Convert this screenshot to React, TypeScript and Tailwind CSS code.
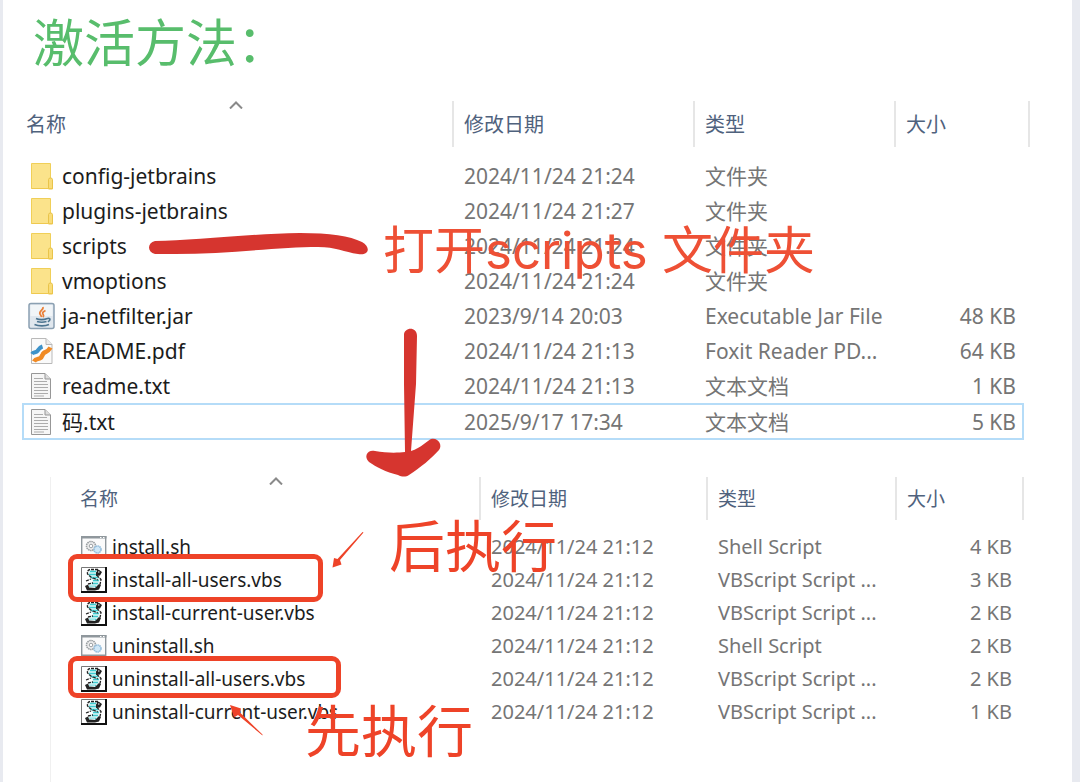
import type { ReactNode } from "react";

type IconKind = "folder" | "jar" | "pdf" | "txt" | "shell" | "vbs";

interface FileEntry {
  name: string;
  icon: IconKind;
  modified: string;
  type: string;
  size?: string;
  selected?: boolean;
}

const PACKAGE_FILES: FileEntry[] = [
  { name: "config-jetbrains", icon: "folder", modified: "2024/11/24 21:24", type: "文件夹" },
  { name: "plugins-jetbrains", icon: "folder", modified: "2024/11/24 21:27", type: "文件夹" },
  { name: "scripts", icon: "folder", modified: "2024/11/24 21:24", type: "文件夹" },
  { name: "vmoptions", icon: "folder", modified: "2024/11/24 21:24", type: "文件夹" },
  { name: "ja-netfilter.jar", icon: "jar", modified: "2023/9/14 20:03", type: "Executable Jar File", size: "48 KB" },
  { name: "README.pdf", icon: "pdf", modified: "2024/11/24 21:13", type: "Foxit Reader PD...", size: "64 KB" },
  { name: "readme.txt", icon: "txt", modified: "2024/11/24 21:13", type: "文本文档", size: "1 KB" },
  { name: "码.txt", icon: "txt", modified: "2025/9/17 17:34", type: "文本文档", size: "5 KB", selected: true },
];

const SCRIPT_FILES: FileEntry[] = [
  { name: "install.sh", icon: "shell", modified: "2024/11/24 21:12", type: "Shell Script", size: "4 KB" },
  { name: "install-all-users.vbs", icon: "vbs", modified: "2024/11/24 21:12", type: "VBScript Script ...", size: "3 KB" },
  { name: "install-current-user.vbs", icon: "vbs", modified: "2024/11/24 21:12", type: "VBScript Script ...", size: "2 KB" },
  { name: "uninstall.sh", icon: "shell", modified: "2024/11/24 21:12", type: "Shell Script", size: "2 KB" },
  { name: "uninstall-all-users.vbs", icon: "vbs", modified: "2024/11/24 21:12", type: "VBScript Script ...", size: "2 KB" },
  { name: "uninstall-current-user.vbs", icon: "vbs", modified: "2024/11/24 21:12", type: "VBScript Script ...", size: "1 KB" },
];

const ICONS: Record<IconKind, ReactNode> = {
  folder: (
    <>
      <path d="M3.500 1.500h19v25h-19z" fill="#fbe38b" stroke="#f0cf58" />
      <path d="M20.500 17.500q0-1.500 2-1.500t2 1.500v9.500h-4z" fill="#f9dc7a" stroke="#e9c44a" />
      <path d="M3.500 26.500h21" stroke="#efc94f" />
    </>
  ),
  jar: (
    <>
      <rect x="1" y="1.500" width="25" height="25" rx="2" fill="#e0e7ee" stroke="#8ba0b2" strokeWidth="1.500" />
      <path d="M2.500 3h22v11h-22z" fill="#f1f5f8" />
      <path d="M15 5c1 3-4.500 4-3 7 .5 1.200 1.600 1.800 1.200 3M17.500 8.500c-3 1.500-3.500 2.500-2.300 4 .7 1 .2 2-.4 2.500" fill="none" stroke="#e9803a" strokeWidth="1.800" />
      <path d="M8 16.500c3 1.300 8 1.300 11.500 0M9 19.500c3 1 6.500 1 9.500 0M6.500 22.500c4 1.800 11 1.800 14.500 0M19.500 16.500c3-.8 3.500 2 .3 3.300" fill="none" stroke="#4c7490" strokeWidth="1.600" />
    </>
  ),
  pdf: (
    <>
      <path d="M3.500 1.500h14.500l6 6v19h-20.500z" fill="#fafafa" stroke="#b9b9b9" />
      <path d="M18 1.500v6h6" fill="#ececec" stroke="#b9b9b9" />
      <path d="M4 17c1.500-2.500 4-1 5.500-3s2-3.500 5-4.500" fill="none" stroke="#3d92c9" strokeWidth="4" />
      <path d="M6 24.500c2-3.500 4.500-2 6.500-3.500s1.500-4 4-5.500c2.500-1.300 4-1.500 6-5" fill="none" stroke="#f08a24" strokeWidth="4.500" />
      <path d="M4 20.500c3-2.500 5-1 7-3s2-4 4.500-5.500 3-1.500 5-4" fill="none" stroke="#fff" />
    </>
  ),
  txt: (
    <>
      <path d="M3.500 1.500h13.500l5.500 5.500v19.500h-19z" fill="#f6f6f6" stroke="#979797" />
      <path d="M17 1.500v5.500h5.500" fill="#dedede" stroke="#979797" />
      <path d="M6 6.500h9M6 9.500h13M6 12.500h14M6 15.500h14M6 18.500h14M6 21.500h14M6 24h10" stroke="#acacac" strokeWidth="1.200" />
    </>
  ),
  shell: (
    <>
      <path d="M1.700 3.700h24v19.500h-24z" fill="#fbfbfb" stroke="#8f979c" strokeWidth="1.400" />
      <path d="M1 3h25.500v2.500H1z" fill="#8f979c" />
      <path d="M20 4.500h1.500M23 4.500h1.500" stroke="#fff" />
      <circle cx="11" cy="13" r="4.500" fill="#f0f0f0" stroke="#9a9fa2" strokeWidth="1.600" strokeDasharray="1.500 .6" />
      <circle cx="11" cy="13" r="1.800" fill="#fff" stroke="#9a9fa2" />
      <circle cx="17.500" cy="16.500" r="3.500" fill="#cfe7f7" stroke="#94bddb" strokeWidth="1.600" strokeDasharray="1.500 .5" />
    </>
  ),
  vbs: (
    <>
      <path d="M1.500 1.500h24v24h-24z" fill="#fff" stroke="#777" />
      <path d="M26 1v25H1" fill="none" stroke="#111" strokeWidth="2" />
      <path d="M9 4h9l-2 4 4 5-2 8-3 2H7l3-5 3-3-5-5z" fill="#dcf6f6" />
      <path d="M10 5.500h6M9 8.500h7M11 11.500h7M13 14.500h6M12 17.500h6M9 20.500h7" stroke="#3ecbd0" strokeWidth="1.700" />
      <path d="M18 3.500h-8Q7 4 7.500 8l5 4.500M17 4.500l3 1.500M17 9.500l4 4-1 5M6 15l5-2M13 12l5 2M8 18l5-1" fill="none" stroke="#222" strokeWidth="1.300" strokeDasharray="3 1" />
      <path d="M16 6.500l2.500-3 3.500 2.500-2 3.500-4 .5zM5 20l3-1.500 1 2.500 6 1 4-4 2 1-2 4.500-4 1H7z" fill="#222" />
      <path d="M9 21h6M18 6h1.500" stroke="#fff" />
    </>
  ),
};

function FileIcon({ kind }: { kind: IconKind }) {
  return (
    <svg className="h-7 w-7 shrink-0" viewBox="0 0 28 28" aria-hidden="true">
      {ICONS[kind]}
    </svg>
  );
}

function SortArrow({ className }: { className: string }) {
  return (
    <svg className={`absolute h-2 w-4 ${className}`} viewBox="0 0 16 8" fill="none" stroke="#8a8a8a" strokeWidth="2" aria-hidden="true">
      <path d="M2 7.500 8 1.500l6 6" />
    </svg>
  );
}

// Root package folder
function PackageTable() {
  return (
    <table className="w-full table-fixed border-separate border-spacing-0 text-left text-[21px] leading-7 text-[#757575]">
      <colgroup>
        <col />
        <col className="w-[241px]" />
        <col className="w-[201px]" />
        <col className="w-[128px]" />
        <col className="w-[6px]" />
      </colgroup>
      <thead className="text-[20px] text-[#4f627d]">
        <tr className="h-[46px]">
          <th className="relative border-r-2 border-[#e6e6e6] pl-1 pt-0.5 font-normal">
            名称
            <SortArrow className="left-[206px] top-0" />
          </th>
          <th className="border-r-2 border-[#e6e6e6] pl-2.5 pt-0.5 font-normal">修改日期</th>
          <th className="border-r-2 border-[#e6e6e6] pl-2.5 pt-0.5 font-normal">类型</th>
          <th className="pl-2.5 pt-0.5 font-normal">大小</th>
          <td className="border-r-2 border-[#e6e6e6]" />
        </tr>
      </thead>
      <tbody>
        <tr className="h-[11px]" aria-hidden="true">
          <td colSpan={5} />
        </tr>
        {PACKAGE_FILES.map((file) => {
          const edge = file.selected ? "border-y-2 border-[#b5dcf8]" : "";
          return (
            <tr key={file.name} className={`whitespace-nowrap ${file.selected ? "h-[37px]" : "h-[35px]"}`}>
              <td className={`${edge} ${file.selected ? "border-l-2 pl-1" : "pl-1.5"}`}>
                <div className="flex items-center gap-1.5 text-[#1c1c1c]">
                  <FileIcon kind={file.icon} />
                  {file.name}
                </div>
              </td>
              <td className={`${edge} pl-2.5`}>{file.modified}</td>
              <td className={`${edge} pl-2.5`}>{file.type}</td>
              <td className={`${edge} text-right ${file.selected ? "border-r-2 pr-1.5" : "pr-2"}`}>{file.size}</td>
              <td />
            </tr>
          );
        })}
      </tbody>
    </table>
  );
}

// Contents of the scripts folder
function ScriptsTable() {
  return (
    <table className="w-full table-fixed border-separate border-spacing-0 text-left text-[20px] leading-6 text-[#757575]">
      <colgroup>
        <col />
        <col className="w-[227px]" />
        <col className="w-[189px]" />
        <col className="w-[127px]" />
      </colgroup>
      <thead className="text-[19px] text-[#4f627d]">
        <tr className="h-[43px]">
          <th className="relative border-r-2 border-[#e6e6e6] pl-[29px] font-normal">
            名称
            <SortArrow className="left-[217px] top-0" />
          </th>
          <th className="border-r-2 border-[#e6e6e6] pl-2.5 font-normal">修改日期</th>
          <th className="border-r-2 border-[#e6e6e6] pl-2.5 font-normal">类型</th>
          <th className="border-r-2 border-[#e6e6e6] pl-2.5 font-normal">大小</th>
        </tr>
      </thead>
      <tbody>
        <tr className="h-[10px]" aria-hidden="true">
          <td colSpan={4} />
        </tr>
        {SCRIPT_FILES.map((file) => (
          <tr key={file.name} className="h-[33px] whitespace-nowrap">
            <td className="pl-[29px]">
              <div className="flex items-center gap-1 text-[19px] text-[#1c1c1c]">
                <FileIcon kind={file.icon} />
                {file.name}
              </div>
            </td>
            <td className="pl-2.5">{file.modified}</td>
            <td className="pl-2.5">{file.type}</td>
            <td className="pr-3 text-right">{file.size}</td>
          </tr>
        ))}
      </tbody>
    </table>
  );
}

// Hand-drawn marks that lie over the two listings
function Annotations() {
  return (
    <div className="pointer-events-none absolute inset-0">
      <svg className="absolute inset-0 h-full w-full" aria-hidden="true">
        <path
          d="M155 241C190 241 245 234 300 233C330 233 350 236 362 242C372 248 368 256 358 254C344 252 336 247 318 247C280 247 225 254 175 254L155 254C147 252 147 243 155 241Z"
          fill="#d6352f"
        />
        <path
          d="M404 335C404 327 417 326 417 336L416 384L411 451C421 448 428 440 431 439C438 437 443 445 439 450C432 458 420 468 409 475C406 477 402 477 398 475C386 472 376 467 369 462C363 456 368 449 375 451C386 453 397 453 405 452L404 384Z"
          fill="#d6352f"
        />
        <path d="M363.500 532.500 340 560l1.500 4.500-9 3 1.500-9.500 3.500 1 25-27z" fill="#ee4328" />
        <path d="M262.500 735.500 238 715l-4 2.500-4-12.500 11 3.500-1 4 22.500 22z" fill="#ee4328" />
      </svg>
      <div className="absolute left-[68px] top-[554px] h-12 w-[255px] rounded-[9px] border-[5px] border-[#ee4328]" />
      <div className="absolute left-[68px] top-[656px] h-[42px] w-[273px] rounded-[9px] border-[5px] border-[#ee4328]" />
      <p className="absolute left-[383px] top-[221px] whitespace-nowrap text-[51px] leading-[60px] text-[#ee5035] font-['Inter','Noto_Sans_CJK_SC',sans-serif]">
        打开scripts 文件夹
      </p>
      <p className="absolute left-[389px] top-[515px] whitespace-nowrap text-[56px] leading-[60px] text-[#ee4328]">后执行</p>
      <p className="absolute left-[305px] top-[700px] whitespace-nowrap text-[56px] leading-[60px] text-[#ee4328]">先执行</p>
    </div>
  );
}

export default function App() {
  return (
    <div lang="zh-CN" className="min-h-screen bg-[#e8eaf0] pl-[3px] pr-2 font-['Noto_Sans','Noto_Sans_CJK_SC',sans-serif]">
      <main className="flex min-h-screen flex-col bg-white">
        <h1 className="pl-[30px] text-[51px] leading-[84px] text-[#58bd6c]">激活方法：</h1>
        <section className="mt-[17px] pl-[19px] pr-[42px]">
          <PackageTable />
        </section>
        <section className="ml-[47px] mr-12 mt-[37px] grow border-l border-[#f0f0f0]">
          <ScriptsTable />
        </section>
      </main>
      <Annotations />
    </div>
  );
}
